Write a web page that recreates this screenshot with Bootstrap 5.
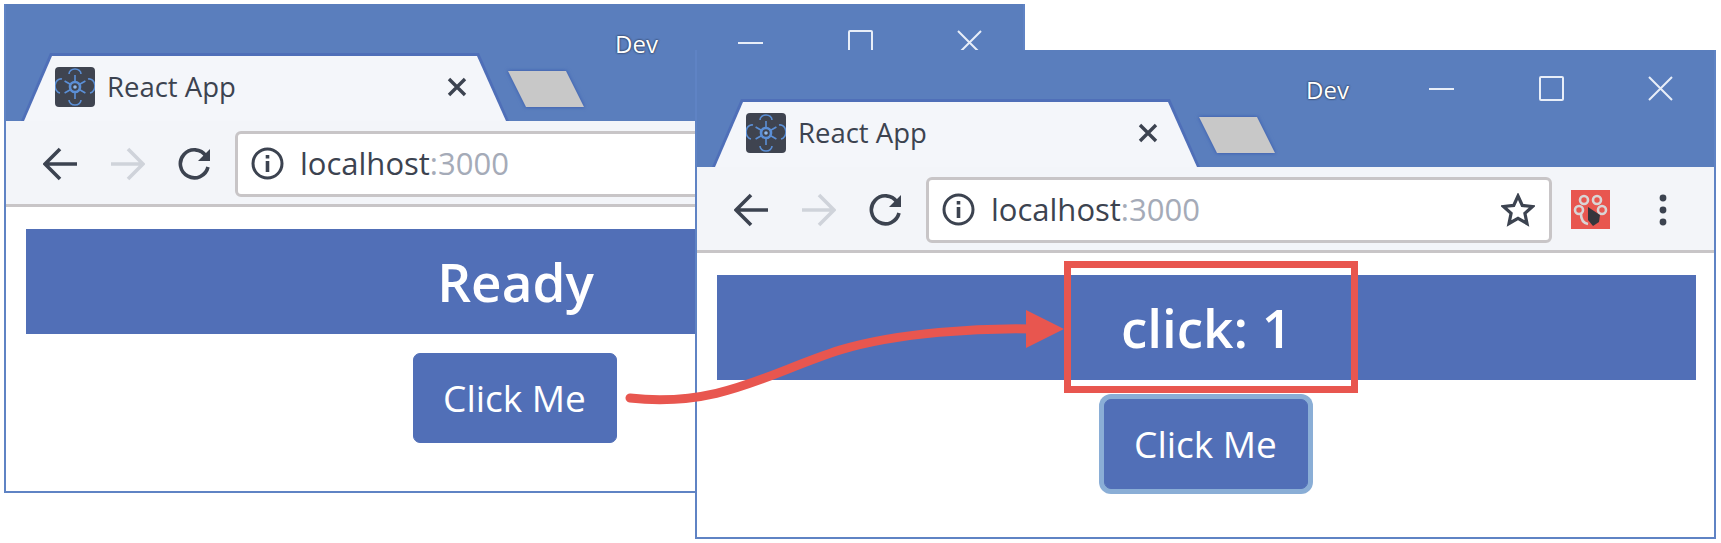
<!DOCTYPE html>
<html lang="en">
  <head>
    <meta charset="UTF-8" />
    <meta name="viewport" content="width=device-width, initial-scale=1.0" />
    <title>React App</title>
    <link
      href="https://cdn.jsdelivr.net/npm/bootstrap@5.3.3/dist/css/bootstrap.min.css"
      rel="stylesheet"
    />
    <style>
      body {
        width: 1721px;
        height: 543px;
        overflow: hidden;
        position: relative;
        background: #fff;
        font-family: "Open Sans", "Noto Sans", sans-serif;
      }

      .desk-window {
        position: absolute;
        width: 1021px;
        height: 489px;
        background: #fff;
        border: 2px solid #5f83c4;
        border-top: 0;
      }

      .win-a {
        left: 4px;
        top: 4px;
      }

      .win-b {
        left: 695px;
        top: 50px;
      }

      .title-strip {
        height: 117px;
        background: #5a7ebd;
        padding-left: 15px;
      }

      .chrome-tab {
        position: relative;
        width: 488px;
        height: 68px;
        padding-left: 34px;
        padding-right: 42px;
        font-size: 27.5px;
        color: #3c4350;
      }

      .chrome-tab::before,
      .chrome-tab::after {
        content: "";
        position: absolute;
        inset: 0;
        z-index: 0;
      }

      .chrome-tab::before {
        background: #4f6fb8;
        clip-path: polygon(0 100%, 29px 0, 458px 0, 100% 100%);
      }

      .chrome-tab::after {
        top: 3px;
        background: #f4f6fa;
        clip-path: polygon(3px 100%, 31px 0, 456px 0, calc(100% - 3px) 100%);
      }

      .chrome-tab > * {
        position: relative;
        z-index: 1;
      }

      .tab-icon {
        width: 40px;
        height: 40px;
        margin-right: 12px;
      }

      .new-tab {
        width: 76px;
        height: 36px;
        margin-bottom: 14px;
        margin-left: -1px;
        background: #c8c8c8;
        clip-path: polygon(0 0, 58px 0, 100% 100%, 18px 100%);
      }

      .tab-outline {
        filter: drop-shadow(0 0 1.5px #4568b4) drop-shadow(0 0 1.5px #4568b4);
        align-self: flex-end;
      }

      .win-label {
        position: absolute;
        left: 609px;
        top: 25px;
        font-size: 24px;
        line-height: 30px;
        color: #fff;
        text-shadow: 0 0 2px #2d3a55, 0 0 2px #2d3a55;
      }

      .win-ctrl {
        position: absolute;
        top: 26px;
      }

      .ctrl-min {
        left: 732px;
      }

      .ctrl-max {
        left: 842px;
      }

      .ctrl-close {
        left: 951px;
      }

      .tool-row {
        height: 86px;
        background: #f3f5f9;
        border-bottom: 3px solid #c8c5c7;
        padding-top: 2px;
        padding-left: 37px;
        gap: 32px;
      }

      .addr-bar {
        flex: 0 0 626px;
        height: 66px;
        margin-left: -9px;
        background: #fff;
        border: 3px solid #c8c5c7;
        border-radius: 6px;
        padding: 0 14px 0 13px;
        font-size: 31px;
        color: #3c4350;
      }

      .addr-port {
        color: #a5abb8;
      }

      .ext-icon {
        margin-left: -13px;
      }

      .menu-dots {
        margin-left: 16px;
      }

      .page-area {
        padding: 22px 18px 0 20px;
      }

      .status-bar {
        height: 105px;
        background: #516fb7;
        color: #fff;
        font-size: 53px;
        font-weight: 600;
        line-height: 1;
      }

      .press-btn {
        width: 204px;
        height: 90px;
        margin-top: 19px;
        margin-right: 2px;
        background: #516fb7;
        border-color: #516fb7;
        font-size: 37px;
        padding: 0;
        border-radius: 7px;
      }

      .press-btn.is-focused {
        box-shadow: 0 0 0 5px #8aaed6;
      }

      .mark-box {
        position: absolute;
        left: 1064px;
        top: 261px;
        width: 294px;
        height: 132px;
        border: 7px solid #e8564f;
      }

      .mark-arrow {
        position: absolute;
        left: 0;
        top: 0;
      }
    </style>
  </head>
  <body>
    <!-- first window: state before the click -->
    <div class="desk-window win-a">
      <div class="title-strip d-flex position-relative">
        <div class="chrome-tab d-flex align-items-center mt-auto">
          <svg class="tab-icon flex-shrink-0" viewBox="0 0 40 40">
            <rect width="40" height="40" rx="4" fill="#3f4450" />
            <g fill="none" stroke="#5b8fd6" stroke-width="1.6">
              <circle cx="20" cy="20" r="5" stroke-width="2.6" />
              <path d="M20 15V8M20 25V32M15.7 17.5 9.6 14M24.3 22.5 30.4 26M15.7 22.5 9.6 26M24.3 17.5 30.4 14" />
              <path d="M14 7A6 5 0 0 1 26 7M14 33A6 5 0 0 0 26 33M7 12A5 6 0 0 0 5 26M33 12A5 6 0 0 1 35 26" />
            </g>
            <circle cx="20" cy="20" r="1.8" fill="#8fb8ea" />
          </svg>
          <span class="flex-grow-1">React App</span>
          <svg width="20" height="20" viewBox="0 0 20 20">
            <path d="M2 2 18 18M18 2 2 18" stroke="#3c4350" stroke-width="3.4" />
          </svg>
        </div>
        <div class="tab-outline"><div class="new-tab"></div></div>
        <span class="win-label">Dev</span>
        <svg class="win-ctrl ctrl-min" width="25" height="25" viewBox="0 0 25 25">
          <path d="M0 13H25" stroke="#e8eef8" stroke-width="2" />
        </svg>
        <svg class="win-ctrl ctrl-max" width="25" height="25" viewBox="0 0 25 25">
          <rect x="1" y="1" width="23" height="23" rx="1" fill="none" stroke="#e8eef8" stroke-width="2" />
        </svg>
        <svg class="win-ctrl ctrl-close" width="25" height="25" viewBox="0 0 25 25">
          <path d="M1 1 24 24M24 1 1 24" stroke="#e8eef8" stroke-width="2" />
        </svg>
      </div>
      <div class="tool-row d-flex align-items-center">
        <svg class="flex-shrink-0" width="35" height="34" viewBox="0 0 35 34">
          <path d="M34 17H3M17 2 2 17l15 15" fill="none" stroke="#3c4350" stroke-width="3.6" />
        </svg>
        <svg class="flex-shrink-0" width="35" height="34" viewBox="0 0 35 34">
          <path d="M1 17H32M18 2l15 15-15 15" fill="none" stroke="#cfd3da" stroke-width="3.6" />
        </svg>
        <svg class="flex-shrink-0" width="35" height="34" viewBox="0 0 35 34">
          <path d="M29 9A14 14 0 1 0 31 20" fill="none" stroke="#3c4350" stroke-width="3.6" />
          <path d="M33 2V14H21Z" fill="#3c4350" />
        </svg>
        <div class="addr-bar d-flex align-items-center">
          <svg class="flex-shrink-0 me-3" width="33" height="33" viewBox="0 0 33 33">
            <circle cx="16.5" cy="16.5" r="14.5" fill="none" stroke="#3c4350" stroke-width="3" />
            <path d="M16.5 14V25M16.5 8V11.5" stroke="#3c4350" stroke-width="3.6" />
          </svg>
          <span>localhost<span class="addr-port">:3000</span></span>
        </div>
      </div>
      <div class="page-area text-center">
        <div class="status-bar d-flex align-items-center justify-content-center">Ready</div>
        <button class="btn btn-primary press-btn" type="button">Click Me</button>
      </div>
    </div>

    <!-- second window: state after the click -->
    <div class="desk-window win-b">
      <div class="title-strip d-flex position-relative">
        <div class="chrome-tab d-flex align-items-center mt-auto">
          <svg class="tab-icon flex-shrink-0" viewBox="0 0 40 40">
            <rect width="40" height="40" rx="4" fill="#3f4450" />
            <g fill="none" stroke="#5b8fd6" stroke-width="1.6">
              <circle cx="20" cy="20" r="5" stroke-width="2.6" />
              <path d="M20 15V8M20 25V32M15.7 17.5 9.6 14M24.3 22.5 30.4 26M15.7 22.5 9.6 26M24.3 17.5 30.4 14" />
              <path d="M14 7A6 5 0 0 1 26 7M14 33A6 5 0 0 0 26 33M7 12A5 6 0 0 0 5 26M33 12A5 6 0 0 1 35 26" />
            </g>
            <circle cx="20" cy="20" r="1.8" fill="#8fb8ea" />
          </svg>
          <span class="flex-grow-1">React App</span>
          <svg width="20" height="20" viewBox="0 0 20 20">
            <path d="M2 2 18 18M18 2 2 18" stroke="#3c4350" stroke-width="3.4" />
          </svg>
        </div>
        <div class="tab-outline"><div class="new-tab"></div></div>
        <span class="win-label">Dev</span>
        <svg class="win-ctrl ctrl-min" width="25" height="25" viewBox="0 0 25 25">
          <path d="M0 13H25" stroke="#e8eef8" stroke-width="2" />
        </svg>
        <svg class="win-ctrl ctrl-max" width="25" height="25" viewBox="0 0 25 25">
          <rect x="1" y="1" width="23" height="23" rx="1" fill="none" stroke="#e8eef8" stroke-width="2" />
        </svg>
        <svg class="win-ctrl ctrl-close" width="25" height="25" viewBox="0 0 25 25">
          <path d="M1 1 24 24M24 1 1 24" stroke="#e8eef8" stroke-width="2" />
        </svg>
      </div>
      <div class="tool-row d-flex align-items-center">
        <svg class="flex-shrink-0" width="35" height="34" viewBox="0 0 35 34">
          <path d="M34 17H3M17 2 2 17l15 15" fill="none" stroke="#3c4350" stroke-width="3.6" />
        </svg>
        <svg class="flex-shrink-0" width="35" height="34" viewBox="0 0 35 34">
          <path d="M1 17H32M18 2l15 15-15 15" fill="none" stroke="#cfd3da" stroke-width="3.6" />
        </svg>
        <svg class="flex-shrink-0" width="35" height="34" viewBox="0 0 35 34">
          <path d="M29 9A14 14 0 1 0 31 20" fill="none" stroke="#3c4350" stroke-width="3.6" />
          <path d="M33 2V14H21Z" fill="#3c4350" />
        </svg>
        <div class="addr-bar d-flex align-items-center">
          <svg class="flex-shrink-0 me-3" width="33" height="33" viewBox="0 0 33 33">
            <circle cx="16.5" cy="16.5" r="14.5" fill="none" stroke="#3c4350" stroke-width="3" />
            <path d="M16.5 14V25M16.5 8V11.5" stroke="#3c4350" stroke-width="3.6" />
          </svg>
          <span class="flex-grow-1">localhost<span class="addr-port">:3000</span></span>
          <svg class="flex-shrink-0" width="34" height="34" viewBox="0 0 34 34">
            <path d="M17 3l4.3 9.4 10.2 1.1-7.6 6.9 2.1 10.1L17 25.4 8 30.5l2.1-10.1-7.6-6.9 10.2-1.1Z" fill="#fff" stroke="#3c4350" stroke-width="3.2" />
          </svg>
        </div>
        <svg class="ext-icon flex-shrink-0" width="39" height="39" viewBox="0 0 39 39">
          <rect width="39" height="39" fill="#e8564f" />
          <g fill="none" stroke="#d9d5d5" stroke-width="2.6">
            <circle cx="13" cy="10" r="4" />
            <circle cx="26" cy="10" r="4" />
            <circle cx="8" cy="20" r="4" />
            <circle cx="31" cy="20" r="4" />
            <path d="M10 24c0 5 2 9 7 10" />
          </g>
          <path d="M17 17l12 8-1 7-6 4-5-6Z" fill="#34363c" />
        </svg>
        <svg class="menu-dots flex-shrink-0" width="10" height="34" viewBox="0 0 10 34">
          <circle cx="5" cy="5" r="3.4" fill="#3c4350" />
          <circle cx="5" cy="17" r="3.4" fill="#3c4350" />
          <circle cx="5" cy="29" r="3.4" fill="#3c4350" />
        </svg>
      </div>
      <div class="page-area text-center">
        <div class="status-bar d-flex align-items-center justify-content-center">click: 1</div>
        <button class="btn btn-primary press-btn is-focused" type="button">Click Me</button>
      </div>
    </div>

    <!-- callout drawn over both windows -->
    <div class="mark-box"></div>
    <svg class="mark-arrow" width="1721" height="543" viewBox="0 0 1721 543">
      <path d="M630 398C720 408 770 372 840 350 900 332 980 328 1032 329" fill="none" stroke="#e8564f" stroke-width="9" stroke-linecap="round" />
      <path d="M1026 310 1064 329 1026 348Z" fill="#e8564f" />
    </svg>
  </body>
</html>
